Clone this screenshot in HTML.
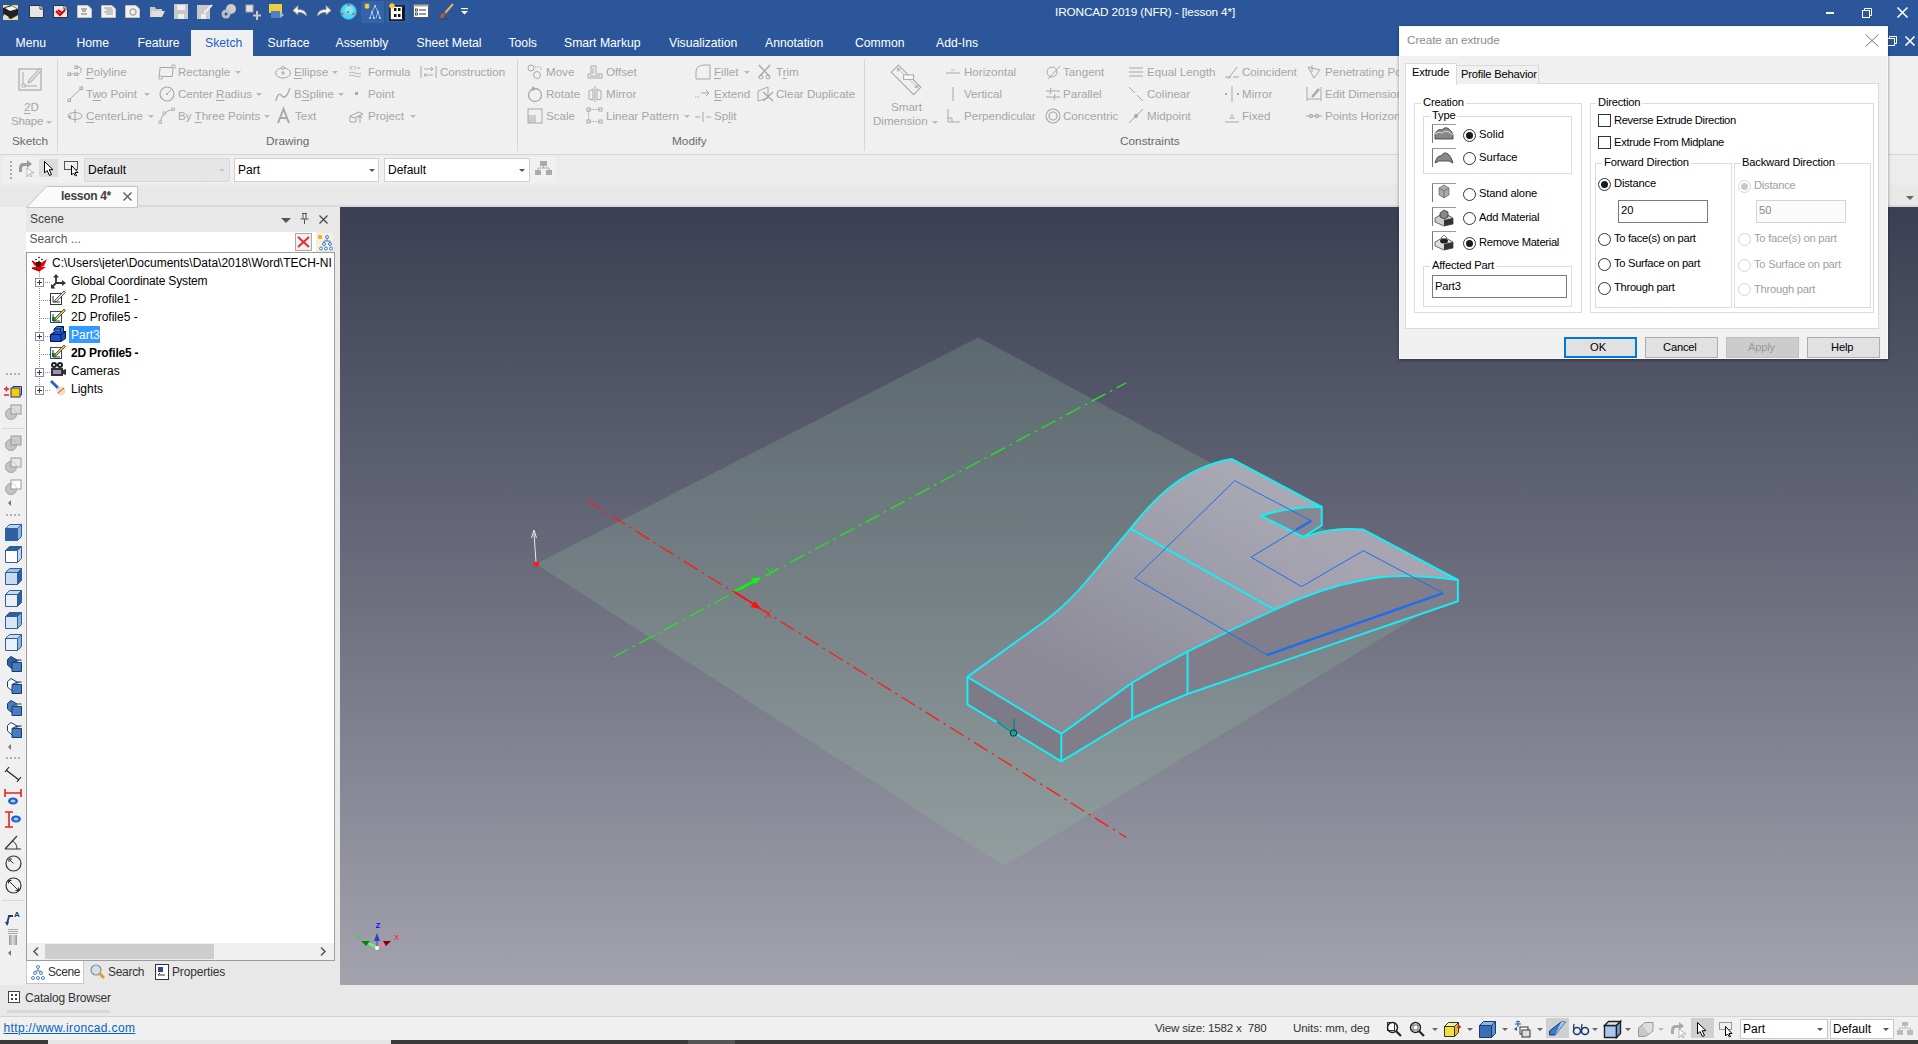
<!DOCTYPE html><html><head><meta charset="utf-8"><style>*{margin:0;padding:0;box-sizing:border-box}
html,body{width:1918px;height:1044px;overflow:hidden;background:#f0f0f0;font-family:"Liberation Sans",sans-serif;font-size:12px;color:#000}
.a{position:absolute}
.t{position:absolute;white-space:nowrap;line-height:1}
svg{position:absolute;overflow:visible}
.tab{position:absolute;top:37px;color:#fff;font-size:12.2px;white-space:nowrap;line-height:1}
.rb{position:absolute;color:#a6a6a6;font-size:11.6px;white-space:nowrap;line-height:1}
.gl{position:absolute;color:#6a6a6a;font-size:11.8px;white-space:nowrap;line-height:1;top:136px}
.sep{position:absolute;width:1px;background:#d6d6d6}
.dd{position:absolute;width:0;height:0;border-left:3px solid transparent;border-right:3px solid transparent;border-top:3px solid #b8b8b8}
.tree{position:absolute;font-size:12px;white-space:nowrap;line-height:1;color:#000}
.dlg{position:absolute;font-size:11.2px;white-space:nowrap;line-height:1;color:#000}
.rad{position:absolute;width:13px;height:13px;border:1px solid #333;border-radius:50%;background:#fff}
.rad.on::after{content:"";position:absolute;left:2px;top:2px;width:7px;height:7px;border-radius:50%;background:#1a1a1a}
.rad.dis{border-color:#d4d4d4;background:#fff}
.rad.dis.on::after{background:#c8c8c8}
.chk{position:absolute;width:13px;height:13px;border:1px solid #333;background:#fff}
.grp{position:absolute;border:1px solid #dcdcdc;border-right-color:#fff;border-bottom-color:#fff;box-shadow:1px 1px 0 #dcdcdc inset}
.btn{position:absolute;border:1px solid #adadad;background:#e1e1e1;font-size:12px;text-align:center;color:#000}

u{text-decoration:underline;text-underline-offset:2px}
</style></head><body>
<div class="a" style="left:0;top:0;width:1918px;height:56px;background:#2b579a"></div>
<div class="a" style="left:0;top:56px;width:1918px;height:98px;background:#f0f0f0"></div>
<div class="a" style="left:0;top:154px;width:1918px;height:1px;background:#d5d5d5"></div>
<div class="a" style="left:0;top:155px;width:1918px;height:30px;background:#ececec"></div>
<div class="a" style="left:3px;top:157px;width:201px;height:26px;background:#f0f0f0"></div>
<div class="a" style="left:206px;top:157px;width:350px;height:26px;background:#f0f0f0"></div>
<div class="a" style="left:0;top:185px;width:1918px;height:22px;background:#e8e8e8"></div>
<div class="a" style="left:0;top:207px;width:26px;height:753px;background:#f0f0f0"></div>
<div class="a" style="left:26px;top:207px;width:314px;height:778px;background:#e8e8e8"></div>
<div class="a" style="left:340px;top:207px;width:1578px;height:778px;background:linear-gradient(#3b3f53 0%,#5a5d6e 30%,#7c7d8a 60%,#a0a1aa 100%)"></div>
<div class="a" style="left:0;top:985px;width:1918px;height:31px;background:#e8e8e8"></div>
<div class="a" style="left:0;top:1016px;width:1918px;height:1px;background:#d4d4d4"></div>
<div class="a" style="left:0;top:1017px;width:1918px;height:23px;background:#f0f0f0"></div>
<div class="a" style="left:0;top:1040px;width:1918px;height:4px;background:#3a3a3a"></div>
<div class="a" style="left:48px;top:1040px;width:343px;height:4px;background:#e6e6e6"></div>
<div class="a" style="left:688px;top:1040px;width:47px;height:4px;background:#555"></div>
<svg style="left:3px;top:5px" width="15" height="15" viewBox="0 0 15 15"><rect x="0" y="0" width="15" height="15" fill="#e8e0a0"/><path d="M0 3 L8 0 L15 4 L15 10 L8 14 L0 11Z" fill="#222"/><path d="M2 3 L9 1 L14 4 L7 6Z" fill="#f5f5f5"/><path d="M1 9 L6 12 L4 14 L0 12Z" fill="#ddd"/></svg>
<svg style="left:29px;top:5px" width="15" height="13" viewBox="0 0 15 13"><path d="M0.5 0.5 H11 L14.5 4 V12.5 H0.5Z" fill="#e6e6ea" stroke="#333" stroke-width="1"/><path d="M11 0.5 V4 H14.5" fill="#fff" stroke="#333"/></svg>
<svg style="left:53px;top:5px" width="15" height="13" viewBox="0 0 15 13"><path d="M0.5 0.5 H11 L14.5 4 V12.5 H0.5Z" fill="#e6e6ea" stroke="#333" stroke-width="1"/><path d="M11 0.5 V4 H14.5" fill="#fff" stroke="#333"/><path d="M3 6 L7 10 L12 5 M5 5 L9 8" stroke="#d00" stroke-width="2" fill="none"/></svg>
<svg style="left:77px;top:5px" width="15" height="13" viewBox="0 0 15 13"><path d="M0.5 0.5 H11 L14.5 4 V12.5 H0.5Z" fill="#f2f2f2" stroke="#c8c0b0" stroke-width="1"/><path d="M4 4 H10 M5 6 H9 M4 9 H10" stroke="#999" stroke-width="1.5"/></svg>
<svg style="left:101px;top:5px" width="15" height="13" viewBox="0 0 15 13"><path d="M0.5 0.5 H11 L14.5 4 V12.5 H0.5Z" fill="#f2f2f2" stroke="#c8c0b0" stroke-width="1"/><path d="M3 3 H11 M5 5 H12 M3 7 H12 M5 9 H12" stroke="#999" stroke-width="1.2"/></svg>
<svg style="left:125px;top:5px" width="15" height="13" viewBox="0 0 15 13"><path d="M0.5 0.5 H11 L14.5 4 V12.5 H0.5Z" fill="#f2f2f2" stroke="#c8c0b0" stroke-width="1"/><circle cx="8" cy="7" r="3" stroke="#aaa" fill="none" stroke-width="1.4"/></svg>
<svg style="left:149px;top:5px" width="16" height="13" viewBox="0 0 16 13"><path d="M1 2 H6 L7 4 H13 V12 H1Z" fill="#c8c8c8"/><path d="M3 6 H16 L13 12 H1Z" fill="#dedede"/></svg>
<svg style="left:174px;top:4px" width="14" height="15" viewBox="0 0 14 15"><rect x="0" y="0" width="14" height="15" fill="#c9c9c9"/><rect x="3" y="1" width="8" height="5" fill="#eee"/><rect x="4" y="10" width="6" height="5" fill="#eee"/></svg>
<svg style="left:197px;top:4px" width="16" height="15" viewBox="0 0 16 15"><rect x="0" y="1" width="13" height="14" fill="#c9c9c9"/><rect x="4" y="10" width="5" height="5" fill="#eee"/><path d="M7 9 L15 1" stroke="#eee" stroke-width="2"/></svg>
<svg style="left:221px;top:3px" width="16" height="16" viewBox="0 0 16 16"><circle cx="10" cy="6" r="5" fill="#ccc"/><circle cx="5" cy="11" r="4.5" fill="#bbb"/><circle cx="5" cy="11" r="1.5" fill="#2b579a"/></svg>
<svg style="left:245px;top:3px" width="17" height="17" viewBox="0 0 17 17"><rect x="1" y="2" width="7" height="7" fill="#e0e0e0" stroke="#aaa"/><path d="M12 8 V17 M8 12.5 H16" stroke="#c8c8c8" stroke-width="2"/></svg>
<svg style="left:268px;top:3px" width="17" height="17" viewBox="0 0 17 17"><rect x="1" y="1" width="13" height="9" fill="#f0d040"/><rect x="3" y="8" width="9" height="7" fill="#5080c0"/><path d="M12 9 L16 12 L12 15" fill="#a0c0e0"/></svg>
<svg style="left:292px;top:4px" width="16" height="13" viewBox="0 0 16 13"><path d="M14.5 12 C14.5 7 11 5.5 6 5.5 L6 1.5 L0.8 6.5 L6 11 L6 8.5 C10 8.5 11 9 14.5 12Z" fill="#f4f4f4" stroke="#888" stroke-width="0.9"/></svg>
<svg style="left:316px;top:4px" width="16" height="13" viewBox="0 0 16 13"><path d="M1.5 12 C1.5 7 5 5.5 10 5.5 L10 1.5 L15.2 6.5 L10 11 L10 8.5 C6 8.5 5 9 1.5 12Z" fill="#f4f4f4" stroke="#888" stroke-width="0.9"/></svg>
<svg style="left:340px;top:3px" width="17" height="17" viewBox="0 0 17 17"><circle cx="8.5" cy="8.5" r="8" fill="#50d8f0"/><circle cx="8.5" cy="8.5" r="8" fill="none" stroke="#3090c0"/><circle cx="9" cy="7" r="4" fill="#a8f0ff" opacity="0.6"/><circle cx="8.5" cy="2" r="1" fill="#e33"/><circle cx="8" cy="9" r="1" fill="#e33"/><circle cx="2.5" cy="11" r="1" fill="#e33"/><circle cx="13.5" cy="11" r="1" fill="#e33"/></svg>
<div class="a" style="left:361px;top:1px;width:23px;height:22px;background:#3563a8"></div>
<svg style="left:364px;top:3px" width="17" height="17" viewBox="0 0 17 17"><path d="M3 0.5 V6 M0.5 3 H5.5 M1 1 L5 5 M5 1 L1 5" stroke="#f8d030" stroke-width="1.2"/><g fill="none" stroke="#a8c8ec" stroke-width="0.9"><path d="M11 3 L8 9 M11 3 L14 9 M8 9 L6 15 M8 9 L10 15 M14 9 L12 15 M14 9 L16 15"/></g><g fill="#c0d8f0"><circle cx="11" cy="3" r="1"/><circle cx="8" cy="9" r="1"/><circle cx="14" cy="9" r="1"/><circle cx="6" cy="15" r="1"/><circle cx="10" cy="15" r="1"/><circle cx="16" cy="15" r="1"/></g></svg>
<div class="a" style="left:386px;top:1px;width:23px;height:22px;background:#2f5ea2"></div>
<svg style="left:388px;top:3px" width="18" height="17" viewBox="0 0 18 17"><rect x="2" y="3" width="14" height="14" fill="#fff" stroke="#111" stroke-width="1.5"/><rect x="6" y="5" width="2.5" height="3" fill="#111"/><rect x="10" y="5" width="2.5" height="3" fill="#111"/><rect x="6" y="11" width="2.5" height="3" fill="#111"/><rect x="10" y="11" width="2.5" height="3" fill="#111"/><path d="M15 4 V16" stroke="#111" stroke-width="2"/><path d="M4 0 V6 M1 3 H7 M2 1 L6 5 M6 1 L2 5" stroke="#f8d030" stroke-width="1.3"/></svg>
<svg style="left:413px;top:4px" width="16" height="14" viewBox="0 0 16 14"><rect x="0.5" y="0.5" width="15" height="13" fill="#fff" stroke="#555"/><rect x="0.5" y="0.5" width="15" height="2" fill="#aaa"/><rect x="2.5" y="5" width="2" height="2" fill="none" stroke="#333" stroke-width="0.8"/><rect x="2.5" y="9" width="2" height="2" fill="none" stroke="#333" stroke-width="0.8"/><path d="M6 6 H13 M6 10 H13" stroke="#333" stroke-width="1"/></svg>
<svg style="left:439px;top:3px" width="15" height="17" viewBox="0 0 15 17"><path d="M14 1 L6 10" stroke="#c89040" stroke-width="2.5"/><path d="M14 1 L7 9" stroke="#f0d8a0" stroke-width="1"/><path d="M2 11 L6 10 L5 14 Q3 16 1 16Z" fill="#d05020"/><path d="M0 16 H10" stroke="#20407a" stroke-width="1"/></svg>
<svg style="left:461px;top:8px" width="7" height="7" viewBox="0 0 7 7"><rect x="0" y="0" width="7" height="1.2" fill="#fff"/><path d="M0 3 H7 L3.5 6.5Z" fill="#fff"/></svg>
<div class="t" style="left:1055px;top:7px;color:#fff;font-size:11.8px;letter-spacing:-0.15px">IRONCAD 2019 (NFR) - [lesson 4*]</div>
<div class="a" style="left:1826px;top:12px;width:8px;height:2px;background:#fff"></div>
<svg style="left:1862px;top:8px" width="10" height="10" viewBox="0 0 10 10"><rect x="0.5" y="2.5" width="7" height="7" fill="none" stroke="#fff"/><path d="M2.5 2.5 V0.5 H9.5 V7.5 H7.5" fill="none" stroke="#fff"/></svg>
<svg style="left:1897px;top:7px" width="11" height="11" viewBox="0 0 11 11"><path d="M0.5 0.5 L10.5 10.5 M10.5 0.5 L0.5 10.5" stroke="#fff" stroke-width="1.6"/></svg>
<div class="tab" style="left:15.5px">Menu</div>
<div class="tab" style="left:76.5px">Home</div>
<div class="tab" style="left:137.5px">Feature</div>
<div class="tab" style="left:267.5px">Surface</div>
<div class="tab" style="left:335.5px">Assembly</div>
<div class="tab" style="left:416.5px">Sheet Metal</div>
<div class="tab" style="left:508.5px">Tools</div>
<div class="tab" style="left:564px">Smart Markup</div>
<div class="tab" style="left:669px">Visualization</div>
<div class="tab" style="left:765px">Annotation</div>
<div class="tab" style="left:855px">Common</div>
<div class="tab" style="left:936px">Add-Ins</div>
<div class="a" style="left:191px;top:30px;width:62px;height:26px;background:#f0f0f0"></div>
<div class="tab" style="left:205px;color:#1c5fc9">Sketch</div>
<svg style="left:1887px;top:36px" width="10" height="10" viewBox="0 0 10 10"><rect x="0.5" y="2.5" width="7" height="7" fill="none" stroke="#fff"/><path d="M2.5 2.5 V0.5 H9.5 V7.5 H7.5" fill="none" stroke="#fff"/></svg>
<svg style="left:1905px;top:36px" width="10" height="10" viewBox="0 0 10 10"><path d="M0.5 0.5 L9.5 9.5 M9.5 0.5 L0.5 9.5" stroke="#fff" stroke-width="1.6"/></svg>
<svg style="left:18px;top:65px" width="25" height="26" viewBox="0 0 25 26"><rect x="1" y="4" width="22" height="21" fill="none" stroke="#a8a8a8" stroke-width="1.2"/><path d="M5 7 V21 H19" fill="none" stroke="#a8a8a8"/><rect x="4" y="19" width="3" height="3" fill="#f0f0f0" stroke="#a8a8a8" stroke-width="0.8"/><path d="M11 15 L22 3 L24 5 L13 17 L10 18Z" fill="#ddd" stroke="#a8a8a8"/></svg>
<div class="rb" style="left:24px;top:101px"><u>2</u>D</div>
<div class="rb" style="left:11px;top:115px;letter-spacing:-0.3px">Shape</div>
<div class="dd" style="left:46px;top:121px"></div>
<div class="gl" style="left:12px">Sketch</div>
<div class="sep" style="left:57px;top:59px;height:92px"></div>
<svg style="left:67px;top:64px" width="16" height="16" viewBox="0 0 16 16"><rect x="1" y="9" width="2.5" height="2.5" fill="none" stroke="#a8a8a8"/><rect x="8" y="9" width="2.5" height="2.5" fill="none" stroke="#a8a8a8"/><rect x="8" y="2" width="2.5" height="2.5" fill="none" stroke="#a8a8a8"/><path d="M3.5 10 H8 M10.5 10.5 Q15 9 14 5 Q13 2 10.5 3" fill="none" stroke="#a8a8a8"/></svg>
<div class="rb" style="left:86px;top:66px"><u>P</u>olyline</div>
<svg style="left:67px;top:86px" width="16" height="16" viewBox="0 0 16 16"><rect x="1" y="13" width="2.5" height="2.5" fill="none" stroke="#a8a8a8"/><rect x="13" y="1" width="2.5" height="2.5" fill="none" stroke="#a8a8a8"/><path d="M3 13 L13.5 3" stroke="#a8a8a8"/></svg>
<div class="rb" style="left:86px;top:88px">T<u>w</u>o Point</div>
<div class="dd" style="left:144px;top:93px"></div>
<svg style="left:67px;top:108px" width="16" height="16" viewBox="0 0 16 16"><ellipse cx="8" cy="8" rx="7" ry="3.5" fill="none" stroke="#a8a8a8"/><path d="M8 1 V15" stroke="#a8a8a8"/><path d="M1 9 L4 7 L4 11Z" fill="#a8a8a8"/></svg>
<div class="rb" style="left:86px;top:110px"><u>C</u>enterLine</div>
<div class="dd" style="left:148px;top:115px"></div>
<svg style="left:159px;top:64px" width="16" height="16" viewBox="0 0 16 16"><rect x="1.5" y="3.5" width="13" height="9" fill="none" stroke="#a8a8a8" transform="skewX(-6)"/><rect x="13" y="1" width="3" height="3" fill="#f0f0f0" stroke="#a8a8a8" stroke-width="0.8"/><rect x="0" y="12" width="3" height="3" fill="#f0f0f0" stroke="#a8a8a8" stroke-width="0.8"/></svg>
<div class="rb" style="left:178px;top:66px">Rectangle</div>
<div class="dd" style="left:235px;top:71px"></div>
<svg style="left:159px;top:86px" width="16" height="16" viewBox="0 0 16 16"><circle cx="8" cy="8" r="7" fill="none" stroke="#a8a8a8" stroke-width="1.2"/><path d="M8 8 L12 4" stroke="#a8a8a8"/><circle cx="8" cy="8" r="1" fill="#a8a8a8"/></svg>
<div class="rb" style="left:178px;top:88px">Center <u>R</u>adius</div>
<div class="dd" style="left:256px;top:93px"></div>
<svg style="left:159px;top:108px" width="16" height="16" viewBox="0 0 16 16"><path d="M1 15 Q3 3 15 1" fill="none" stroke="#a8a8a8"/><rect x="0" y="13" width="2.5" height="2.5" fill="#f0f0f0" stroke="#a8a8a8" stroke-width="0.8"/><rect x="4" y="4" width="2.5" height="2.5" fill="#f0f0f0" stroke="#a8a8a8" stroke-width="0.8"/><rect x="13" y="0" width="2.5" height="2.5" fill="#f0f0f0" stroke="#a8a8a8" stroke-width="0.8"/></svg>
<div class="rb" style="left:178px;top:110px">By <u>T</u>hree Points</div>
<div class="dd" style="left:264px;top:115px"></div>
<svg style="left:275px;top:64px" width="16" height="16" viewBox="0 0 16 16"><ellipse cx="8" cy="9" rx="7.5" ry="5" fill="none" stroke="#a8a8a8"/><circle cx="8" cy="4" r="1.5" fill="#f0f0f0" stroke="#a8a8a8"/><path d="M8 7 V11 M6 9 H10" stroke="#a8a8a8"/></svg>
<div class="rb" style="left:294px;top:66px"><u>E</u>llipse</div>
<div class="dd" style="left:332px;top:71px"></div>
<svg style="left:275px;top:86px" width="16" height="16" viewBox="0 0 16 16"><path d="M1 15 Q3 5 7 10 Q11 14 15 2" fill="none" stroke="#a8a8a8" stroke-width="1.3"/></svg>
<div class="rb" style="left:294px;top:88px">B<u>S</u>pline</div>
<div class="dd" style="left:338px;top:93px"></div>
<svg style="left:277px;top:108px" width="16" height="16" viewBox="0 0 16 16"><path d="M1 15 L6.5 1 L12 15 M3 10 H10" fill="none" stroke="#a8a8a8" stroke-width="2"/></svg>
<div class="rb" style="left:295px;top:110px">Text</div>
<svg style="left:349px;top:64px" width="16" height="16" viewBox="0 0 16 16"><text x="0" y="6" font-size="6" fill="#a8a8a8" font-family="Liberation Sans">XY=</text><path d="M0 9 Q3 7 6 9 T12 9 M0 12 Q3 10 6 12 T12 12" fill="none" stroke="#a8a8a8" stroke-width="0.8"/></svg>
<div class="rb" style="left:368px;top:66px">Formula</div>
<svg style="left:349px;top:86px" width="16" height="16" viewBox="0 0 16 16"><rect x="6" y="6" width="3" height="3" fill="#a8a8a8"/></svg>
<div class="rb" style="left:368px;top:88px">Point</div>
<svg style="left:349px;top:108px" width="16" height="16" viewBox="0 0 16 16"><path d="M1 8 L10 4 L14 6 L5 10Z M1 8 V14 H7 V10" fill="none" stroke="#a8a8a8"/><path d="M11 15 V8 M9 10 L11 7 L13 10" stroke="#a8a8a8" fill="none"/></svg>
<div class="rb" style="left:368px;top:110px">Project</div>
<div class="dd" style="left:410px;top:115px"></div>
<svg style="left:421px;top:64px" width="16" height="16" viewBox="0 0 16 16"><path d="M0 2 V14 M15 2 V14 M3 5 H12 M10 3 L12 5 L10 7 M12 11 H3 M5 9 L3 11 L5 13" fill="none" stroke="#a8a8a8"/></svg>
<div class="rb" style="left:440px;top:66px">Construction</div>
<svg style="left:527px;top:64px" width="16" height="16" viewBox="0 0 16 16"><circle cx="4" cy="4" r="3" fill="none" stroke="#a8a8a8"/><circle cx="10" cy="11" r="3.5" fill="none" stroke="#a8a8a8"/><path d="M8 3 H14 V7" fill="none" stroke="#a8a8a8" stroke-dasharray="1.5 1"/></svg>
<div class="rb" style="left:546px;top:66px">Move</div>
<svg style="left:527px;top:86px" width="16" height="16" viewBox="0 0 16 16"><circle cx="8" cy="9" r="6.5" fill="none" stroke="#a8a8a8" stroke-width="1.3"/><path d="M5 0 L9 3 L5 5Z" fill="#a8a8a8"/></svg>
<div class="rb" style="left:546px;top:88px">Rotate</div>
<svg style="left:527px;top:108px" width="16" height="16" viewBox="0 0 16 16"><rect x="1" y="1" width="14" height="14" fill="none" stroke="#a8a8a8"/><rect x="1" y="7" width="8" height="8" fill="#a8a8a8" opacity="0.5"/></svg>
<div class="rb" style="left:546px;top:110px">Scale</div>
<svg style="left:587px;top:64px" width="16" height="16" viewBox="0 0 16 16"><path d="M1 14 H15 V10 H9 V2 H4 V10 H1Z M3 12 H13 M6 10 V4" fill="none" stroke="#a8a8a8"/></svg>
<div class="rb" style="left:606px;top:66px">Offset</div>
<svg style="left:587px;top:86px" width="16" height="16" viewBox="0 0 16 16"><path d="M8 0 V16" stroke="#a8a8a8"/><path d="M6 3 L2 5 V13 L6 14Z M10 3 L14 5 V13 L10 14Z" fill="none" stroke="#a8a8a8"/></svg>
<div class="rb" style="left:606px;top:88px">Mirror</div>
<svg style="left:587px;top:108px" width="16" height="16" viewBox="0 0 16 16"><rect x="0" y="0" width="3" height="3" fill="none" stroke="#a8a8a8"/><rect x="12" y="0" width="3" height="3" fill="none" stroke="#a8a8a8"/><rect x="0" y="12" width="3" height="3" fill="none" stroke="#a8a8a8"/><rect x="12" y="12" width="3" height="3" fill="none" stroke="#a8a8a8"/><path d="M3 1.5 H12 M3 13.5 H12 M1.5 3 V12" stroke="#a8a8a8" stroke-dasharray="1.5 1"/></svg>
<div class="rb" style="left:606px;top:110px">Linear Pattern</div>
<div class="dd" style="left:684px;top:115px"></div>
<svg style="left:695px;top:64px" width="16" height="16" viewBox="0 0 16 16"><path d="M1 15 V8 Q1 1 9 1 H15 V15Z" fill="none" stroke="#a8a8a8"/></svg>
<div class="rb" style="left:714px;top:66px"><u>F</u>illet</div>
<div class="dd" style="left:744px;top:71px"></div>
<svg style="left:695px;top:86px" width="16" height="16" viewBox="0 0 16 16"><path d="M0 11 H5" stroke="#a8a8a8" stroke-dasharray="1.5 1"/><path d="M6 7 H14 M11 4 L14 7 L11 10" fill="none" stroke="#a8a8a8"/></svg>
<div class="rb" style="left:714px;top:88px"><u>E</u>xtend</div>
<svg style="left:695px;top:108px" width="16" height="16" viewBox="0 0 16 16"><path d="M0 9 H5 M11 9 H16 M8 4 V14" stroke="#a8a8a8"/></svg>
<div class="rb" style="left:714px;top:110px">Sp<u>l</u>it</div>
<svg style="left:757px;top:64px" width="16" height="16" viewBox="0 0 16 16"><path d="M2 1 L13 13 M13 1 L2 13" stroke="#a8a8a8" stroke-width="1.3"/><circle cx="4" cy="13" r="2" fill="none" stroke="#a8a8a8"/><circle cx="11" cy="13" r="2" fill="none" stroke="#a8a8a8"/></svg>
<div class="rb" style="left:776px;top:66px">T<u>r</u>im</div>
<svg style="left:757px;top:86px" width="16" height="16" viewBox="0 0 16 16"><path d="M1 5 L11 1 V12 L1 15Z" fill="none" stroke="#a8a8a8"/><path d="M6 6 L16 15 M16 6 L6 15" stroke="#a8a8a8" stroke-width="1.3"/></svg>
<div class="rb" style="left:776px;top:88px">Clear Duplicate</div>
<svg style="left:945px;top:64px" width="16" height="16" viewBox="0 0 16 16"><path d="M1 9 H15" stroke="#a8a8a8"/><path d="M6 6 H10" stroke="#a8a8a8" stroke-width="0.7"/></svg>
<div class="rb" style="left:964px;top:66px">Horizontal</div>
<svg style="left:945px;top:86px" width="16" height="16" viewBox="0 0 16 16"><path d="M8 1 V15" stroke="#a8a8a8"/></svg>
<div class="rb" style="left:964px;top:88px">Vertical</div>
<svg style="left:945px;top:108px" width="16" height="16" viewBox="0 0 16 16"><path d="M3 1 V14 H15 M3 10 H7 V14" fill="none" stroke="#a8a8a8"/></svg>
<div class="rb" style="left:964px;top:110px">Perpendicular</div>
<svg style="left:1045px;top:64px" width="16" height="16" viewBox="0 0 16 16"><circle cx="7" cy="8" r="5" fill="none" stroke="#a8a8a8"/><path d="M3 15 L15 2" stroke="#a8a8a8"/></svg>
<div class="rb" style="left:1063px;top:66px">Tangent</div>
<svg style="left:1045px;top:86px" width="16" height="16" viewBox="0 0 16 16"><path d="M1 5 H15 M1 11 H15 M6 2 L5 8 M10 8 L9 14" fill="none" stroke="#a8a8a8"/></svg>
<div class="rb" style="left:1063px;top:88px">Parallel</div>
<svg style="left:1045px;top:108px" width="16" height="16" viewBox="0 0 16 16"><circle cx="8" cy="8" r="7" fill="none" stroke="#a8a8a8" stroke-width="1.2"/><circle cx="8" cy="8" r="4" fill="none" stroke="#a8a8a8" stroke-width="1.2"/></svg>
<div class="rb" style="left:1063px;top:110px">Concentric</div>
<svg style="left:1128px;top:64px" width="16" height="16" viewBox="0 0 16 16"><path d="M1 4 H15 M1 8 H15 M1 12 H15" stroke="#a8a8a8"/></svg>
<div class="rb" style="left:1147px;top:66px">Equal Length</div>
<svg style="left:1128px;top:86px" width="16" height="16" viewBox="0 0 16 16"><path d="M1 1 L7 7 M9 9 L15 15" stroke="#a8a8a8"/></svg>
<div class="rb" style="left:1147px;top:88px">Colinear</div>
<svg style="left:1128px;top:108px" width="16" height="16" viewBox="0 0 16 16"><path d="M1 15 L15 1" stroke="#a8a8a8"/><circle cx="8" cy="8" r="2" fill="#a8a8a8"/></svg>
<div class="rb" style="left:1147px;top:110px">Midpoint</div>
<svg style="left:1224px;top:64px" width="16" height="16" viewBox="0 0 16 16"><path d="M1 13 H7 M9 13 H15 M4 15 L13 3" stroke="#a8a8a8"/></svg>
<div class="rb" style="left:1242px;top:66px">Coincident</div>
<svg style="left:1224px;top:86px" width="16" height="16" viewBox="0 0 16 16"><path d="M8 0 V16" stroke="#a8a8a8"/><rect x="1" y="7" width="2" height="2" fill="#a8a8a8"/><rect x="13" y="7" width="2" height="2" fill="#a8a8a8"/></svg>
<div class="rb" style="left:1242px;top:88px">Mirror</div>
<svg style="left:1224px;top:108px" width="16" height="16" viewBox="0 0 16 16"><path d="M1 14 H15 M5 10 H11 M8 6 V10" stroke="#a8a8a8"/></svg>
<div class="rb" style="left:1242px;top:110px">Fixed</div>
<svg style="left:1306px;top:64px" width="16" height="16" viewBox="0 0 16 16"><path d="M2 3 L14 6 L8 14Z" fill="none" stroke="#a8a8a8"/><path d="M6 1 V8" stroke="#a8a8a8"/></svg>
<div class="rb" style="left:1325px;top:66px">Penetrating Points</div>
<svg style="left:1306px;top:86px" width="16" height="16" viewBox="0 0 16 16"><path d="M1 1 V15 M15 1 V15 M1 13 H15" stroke="#a8a8a8"/><path d="M6 11 L13 3" stroke="#a8a8a8" stroke-width="2.5"/></svg>
<div class="rb" style="left:1325px;top:88px">Edit Dimension</div>
<svg style="left:1306px;top:108px" width="16" height="16" viewBox="0 0 16 16"><path d="M0 8 H16" stroke="#a8a8a8"/><circle cx="5" cy="8" r="1.8" fill="none" stroke="#a8a8a8"/><circle cx="11" cy="8" r="1.8" fill="none" stroke="#a8a8a8"/></svg>
<div class="rb" style="left:1325px;top:110px">Points Horizontal</div>
<div class="gl" style="left:266px">Drawing</div>
<div class="sep" style="left:517px;top:59px;height:92px"></div>
<div class="gl" style="left:672px">Modify</div>
<div class="sep" style="left:864px;top:59px;height:92px"></div>
<svg style="left:890px;top:64px" width="32" height="32" viewBox="0 0 32 32"><path d="M1.2 8.1 L8.4 1.2 L30.8 23.3 L23.6 30.6Z" fill="none" stroke="#a8a8a8" stroke-width="1.1"/><path d="M7 4 L28 24" stroke="#c0c0c0" stroke-width="0.9"/><path d="M6.5 3.5 L11 4.5 L7.5 8Z M28.5 24.5 L24 23.5 L27.5 20Z" fill="#b8b8b8"/><rect x="13.6" y="10.9" width="10" height="4.5" fill="#fafafa" stroke="#a8a8a8" stroke-width="1"/></svg>
<div class="rb" style="left:891px;top:101px">Smart</div>
<div class="rb" style="left:873px;top:115px">Dimension</div>
<div class="dd" style="left:932px;top:121px"></div>
<div class="gl" style="left:1120px">Constraints</div>
<div class="a" style="left:10px;top:161px;width:2px;height:2px;background:#aaa"></div>
<div class="a" style="left:10px;top:165px;width:2px;height:2px;background:#aaa"></div>
<div class="a" style="left:10px;top:169px;width:2px;height:2px;background:#aaa"></div>
<div class="a" style="left:10px;top:173px;width:2px;height:2px;background:#aaa"></div>
<div class="a" style="left:10px;top:177px;width:2px;height:2px;background:#aaa"></div>
<svg style="left:18px;top:160px" width="18" height="17" viewBox="0 0 18 17"><path d="M1 8 Q1 3 6 3 H9 V0 L14 4 L9 8 V6 H6 Q4 6 4 9 V12 H1Z" fill="#9a9a9a"/><path d="M9 8 L9 17 L11 14 L13 17 L14 16 L12 13 L16 13Z" fill="#fff" stroke="#aaa" stroke-width="0.8"/></svg>
<div class="a" style="left:39px;top:159px;width:19px;height:18px;background:#dcdcdc"></div>
<svg style="left:44px;top:161px" width="11" height="15" viewBox="0 0 11 15"><path d="M0.5 0.5 V12 L3 9.5 L5.5 14.5 L7.5 13.5 L5.2 8.7 L9 8.7Z" fill="#fff" stroke="#000" stroke-width="1"/></svg>
<svg style="left:64px;top:161px" width="15" height="15" viewBox="0 0 15 15"><rect x="0.5" y="0.5" width="13" height="8" fill="none" stroke="#555"/><path d="M7.5 4.5 V14 L9.5 12 L11.5 15 L12.5 14.5 L11 11.5 L14 11.5Z" fill="#fff" stroke="#000" stroke-width="1"/></svg>
<div class="a" style="left:84px;top:158px;width:146px;height:24px;background:#e6e6e6;border:1px solid #d8d8d8"></div>
<div class="t" style="left:88px;top:164px;font-size:12px;color:#000">Default</div>
<div class="dd" style="left:219px;top:169px;border-top-color:#c8c8c8"></div>
<div class="a" style="left:234px;top:158px;width:145px;height:24px;background:#fff;border:1px solid #d0d0d0"></div>
<div class="t" style="left:238px;top:164px;font-size:12px;color:#000">Part</div>
<div class="dd" style="left:369px;top:169px;border-top-color:#555"></div>
<div class="a" style="left:384px;top:158px;width:146px;height:24px;background:#fff;border:1px solid #d0d0d0"></div>
<div class="t" style="left:388px;top:164px;font-size:12px;color:#000">Default</div>
<div class="dd" style="left:519px;top:169px;border-top-color:#555"></div>
<svg style="left:535px;top:161px" width="17" height="14" viewBox="0 0 17 14"><rect x="5" y="0" width="7" height="5" fill="#aaa"/><path d="M8.5 5 V7 M3 7 H14 M3 7 V9 M14 7 V9" stroke="#aaa"/><rect x="0" y="9" width="6" height="5" fill="#aaa"/><rect x="11" y="9" width="6" height="5" fill="#aaa"/></svg>
<div class="a" style="left:137px;top:205px;width:1781px;height:2px;background:#dadada"></div>
<svg style="left:26px;top:186px" width="112" height="22" viewBox="0 0 112 22"><path d="M0.5 21.5 L20.5 0.5 H111.5 V21.5Z" fill="#fbfbfb" stroke="#c4c4c4"/></svg>
<div class="t" style="left:61px;top:190px;font-size:12px;font-weight:bold;color:#404040;letter-spacing:-0.3px">lesson 4*</div>
<svg style="left:123px;top:192px" width="9" height="9" viewBox="0 0 9 9"><path d="M0.5 0.5 L8.5 8.5 M8.5 0.5 L0.5 8.5" stroke="#555" stroke-width="1.2"/></svg>
<div class="dd" style="left:1906px;top:196px;border-left-width:4px;border-right-width:4px;border-top:4px solid #666"></div>
<div class="t" style="left:30px;top:213px;font-size:12px;color:#444">Scene</div>
<div class="dd" style="left:281px;top:218px;border-left-width:5px;border-right-width:5px;border-top:5px solid #555"></div>
<svg style="left:300px;top:213px" width="9" height="11" viewBox="0 0 9 11"><path d="M2 0.5 H7 M3 0.5 V6 M6 0.5 V6 M0.5 6 H8.5 M4.5 6 V11" stroke="#555" fill="none"/></svg>
<svg style="left:319px;top:215px" width="9" height="9" viewBox="0 0 9 9"><path d="M0.5 0.5 L8.5 8.5 M8.5 0.5 L0.5 8.5" stroke="#444" stroke-width="1.2"/></svg>
<div class="a" style="left:26px;top:232px;width:290px;height:20px;background:#fff"></div>
<div class="t" style="left:29.5px;top:233px;font-size:12px;color:#555">Search ...</div>
<div class="a" style="left:295px;top:233px;width:17px;height:18px;background:#f0f0f0;border:1px solid #aaa"></div>
<svg style="left:297px;top:236px" width="13" height="12" viewBox="0 0 13 12"><path d="M1 1 L12 11 M12 1 L1 11" stroke="#e03030" stroke-width="2"/></svg>
<div class="a" style="left:316px;top:233px;width:17px;height:18px;background:#f5f0e0"></div>
<svg style="left:317px;top:234px" width="16" height="16" viewBox="0 0 16 16"><circle cx="3" cy="3" r="2.2" fill="#f0b020"/><g fill="none" stroke="#4080d0" stroke-width="1"><circle cx="10" cy="3" r="1.5"/><path d="M10 4.5 V7 M7 7 H13 M7 7 V9 M13 7 V9"/><circle cx="7" cy="10" r="1.5"/><circle cx="13" cy="10" r="1.5"/><circle cx="4" cy="14.5" r="1.5"/><circle cx="9" cy="14.5" r="1.5"/><circle cx="14" cy="14.5" r="1.5"/></g></svg>
<div class="a" style="left:26px;top:252px;width:309px;height:709px;background:#fff;border:1px solid #9c9c9c"></div>
<div class="a" style="left:39px;top:272px;width:0;height:119px;border-left:1px dotted #909090"></div>
<div class="a" style="left:39px;top:282px;width:11px;height:0;border-top:1px dotted #909090"></div>
<div class="a" style="left:39px;top:300px;width:11px;height:0;border-top:1px dotted #909090"></div>
<div class="a" style="left:39px;top:318px;width:11px;height:0;border-top:1px dotted #909090"></div>
<div class="a" style="left:39px;top:336px;width:11px;height:0;border-top:1px dotted #909090"></div>
<div class="a" style="left:39px;top:354px;width:11px;height:0;border-top:1px dotted #909090"></div>
<div class="a" style="left:39px;top:372px;width:11px;height:0;border-top:1px dotted #909090"></div>
<div class="a" style="left:39px;top:390px;width:11px;height:0;border-top:1px dotted #909090"></div>
<div class="a" style="left:35px;top:278px;width:9px;height:9px;background:#fff;border:1px solid #8c8c8c"></div>
<div class="a" style="left:37px;top:282px;width:5px;height:1px;background:#203c90"></div>
<div class="a" style="left:39px;top:280px;width:1px;height:5px;background:#203c90"></div>
<div class="a" style="left:35px;top:332px;width:9px;height:9px;background:#fff;border:1px solid #8c8c8c"></div>
<div class="a" style="left:37px;top:336px;width:5px;height:1px;background:#203c90"></div>
<div class="a" style="left:39px;top:334px;width:1px;height:5px;background:#203c90"></div>
<div class="a" style="left:35px;top:368px;width:9px;height:9px;background:#fff;border:1px solid #8c8c8c"></div>
<div class="a" style="left:37px;top:372px;width:5px;height:1px;background:#203c90"></div>
<div class="a" style="left:39px;top:370px;width:1px;height:5px;background:#203c90"></div>
<div class="a" style="left:35px;top:386px;width:9px;height:9px;background:#fff;border:1px solid #8c8c8c"></div>
<div class="a" style="left:37px;top:390px;width:5px;height:1px;background:#203c90"></div>
<div class="a" style="left:39px;top:388px;width:1px;height:5px;background:#203c90"></div>
<svg style="left:31px;top:256px" width="17" height="16" viewBox="0 0 17 16"><path d="M1 5 L7 9 L16 3 L13 10 L10 11 L15 11 L9 15 L1 11 L6 11 L3 9Z" fill="#f00000"/><path d="M1 5 L7 9 M1 12 L9 15" stroke="#a00000" stroke-width="1.5"/><rect x="5" y="6" width="5" height="5" fill="#600000"/><circle cx="8" cy="1.5" r="0.8" fill="#000"/><circle cx="5" cy="3.5" r="0.8" fill="#000"/><circle cx="11" cy="3.5" r="0.8" fill="#000"/><circle cx="8" cy="5.5" r="0.8" fill="#000"/></svg>
<div class="tree" style="left:52px;top:257px;width:281px;overflow:hidden">C:\Users\jeter\Documents\Data\2018\Word\TECH-NI</div>
<svg style="left:50px;top:273px" width="17" height="17" viewBox="0 0 17 17"><path d="M6 4 V10 H13 M6 10 L2.5 13.5" stroke="#333" stroke-width="1.8" fill="none"/><path d="M3 4.5 L6 1 L9 4.5Z M12 7 L16 10 L12 13Z M1 11 L1 15.5 L5.5 15.5Z" fill="#333"/></svg>
<div class="tree" style="left:71px;top:275px;letter-spacing:-0.15px">Global Coordinate System</div>
<svg style="left:50px;top:290px" width="16" height="15" viewBox="0 0 16 15"><rect x="0.5" y="3.5" width="11" height="11" fill="#fff" stroke="#333"/><path d="M3 6 V12 H10" stroke="#333" fill="none"/><path d="M5 10 L14 1 L15.5 2.5 L6.5 11.5 L4.5 12Z" fill="#ddd" stroke="#333" stroke-width="0.8"/></svg>
<div class="tree" style="left:71px;top:293px">2D Profile1 -</div>
<svg style="left:50px;top:308px" width="16" height="15" viewBox="0 0 16 15"><rect x="0.5" y="3.5" width="11" height="11" fill="#fff" stroke="#2a4a8a"/><path d="M5 10 L14 1 L15.5 2.5 L6.5 11.5 L4.5 12Z" fill="#f0c040" stroke="#333" stroke-width="0.8"/><rect x="2" y="9" width="4" height="4" fill="#20a040"/><path d="M3 6 V13 H10" stroke="#333" fill="none"/></svg>
<div class="tree" style="left:71px;top:311px">2D Profile5 -</div>
<svg style="left:50px;top:326px" width="16" height="16" viewBox="0 0 16 16"><path d="M0.5 8.5 L5 5.5 H15.5 V12.5 L11 15.5 H0.5Z" fill="#1a50c0" stroke="#081848"/><path d="M0.5 8.5 H11 L15.5 5.5 M11 8.5 V15.5" fill="none" stroke="#081848"/><path d="M4 5.5 V3 L7 0.5 H13.5 V5.5" fill="#3a80e8" stroke="#081848"/><path d="M4 3 H10.5 L13.5 0.5 M10.5 3 V5.5" fill="none" stroke="#081848"/></svg>
<div class="a" style="left:69px;top:326px;width:31px;height:17px;background:#3399ff"></div>
<div class="tree" style="left:71px;top:329px;color:#fff">Part3</div>
<svg style="left:50px;top:344px" width="16" height="15" viewBox="0 0 16 15"><rect x="0.5" y="3.5" width="11" height="11" fill="#fff" stroke="#2a4a8a"/><path d="M5 10 L14 1 L15.5 2.5 L6.5 11.5 L4.5 12Z" fill="#f0c040" stroke="#333" stroke-width="0.8"/><rect x="2" y="9" width="4" height="4" fill="#20a040"/><path d="M3 6 V13 H10" stroke="#333" fill="none"/></svg>
<div class="tree" style="left:71px;top:347px;font-weight:bold;letter-spacing:-0.2px">2D Profile5 -</div>
<svg style="left:50px;top:361px" width="16" height="16" viewBox="0 0 16 16"><circle cx="4" cy="4" r="3" fill="#222"/><circle cx="10" cy="4" r="3" fill="#222"/><circle cx="4" cy="4" r="1" fill="#fff"/><circle cx="10" cy="4" r="1" fill="#fff"/><rect x="1" y="7" width="12" height="8" fill="#333"/><rect x="3" y="9" width="8" height="4" fill="#a090c0"/><path d="M13 9 L16 8 V14 L13 13Z" fill="#333"/></svg>
<div class="tree" style="left:71px;top:365px">Cameras</div>
<svg style="left:50px;top:380px" width="16" height="16" viewBox="0 0 16 16"><path d="M1 1 L9 9" stroke="#3060c0" stroke-width="3"/><circle cx="11" cy="11" r="4.5" fill="#e8e0c0"/><path d="M8 13 L14 8" stroke="#e03030" stroke-width="1"/></svg>
<div class="tree" style="left:71px;top:383px">Lights</div>
<div class="a" style="left:27px;top:943px;width:307px;height:17px;background:#f0f0f0"></div>
<div class="a" style="left:45px;top:944px;width:169px;height:15px;background:#cdcdcd"></div>
<svg style="left:33px;top:947px" width="6" height="9" viewBox="0 0 6 9"><path d="M5 0.5 L1 4.5 L5 8.5" stroke="#555" stroke-width="1.5" fill="none"/></svg>
<svg style="left:320px;top:947px" width="6" height="9" viewBox="0 0 6 9"><path d="M1 0.5 L5 4.5 L1 8.5" stroke="#555" stroke-width="1.5" fill="none"/></svg>
<div class="a" style="left:26px;top:961px;width:58px;height:23px;background:#fff;border:1px solid #c8c8c8;border-top:none"></div>
<svg style="left:31px;top:965px" width="14" height="15" viewBox="0 0 14 15"><g fill="none" stroke="#4a80c8" stroke-width="1"><circle cx="7" cy="2" r="1.5"/><path d="M7 3.5 V6 M4 6 H10"/><circle cx="4" cy="8" r="1.5"/><circle cx="10" cy="8" r="1.5"/><circle cx="2" cy="13" r="1.5"/><circle cx="7" cy="13" r="1.5"/><circle cx="12" cy="13" r="1.5"/></g></svg>
<div class="t" style="left:48px;top:966px;font-size:12px;color:#333;letter-spacing:-0.4px">Scene</div>
<svg style="left:90px;top:964px" width="16" height="16" viewBox="0 0 16 16"><circle cx="6" cy="6" r="5" fill="#d0e0f0" stroke="#8090a0" stroke-width="1.2"/><path d="M9 9 L14 14" stroke="#e0a030" stroke-width="3"/></svg>
<div class="t" style="left:108px;top:966px;font-size:12px;color:#333;letter-spacing:-0.3px">Search</div>
<svg style="left:155px;top:964px" width="14" height="16" viewBox="0 0 14 16"><rect x="0.5" y="0.5" width="13" height="15" fill="#fff" stroke="#333"/><rect x="3" y="3" width="5" height="5" fill="#2a4a8a"/><path d="M3 11 H10 M3 11 L5 9" stroke="#333" fill="none"/></svg>
<div class="t" style="left:172px;top:966px;font-size:12px;color:#333;letter-spacing:-0.15px">Properties</div>
<svg style="left:8px;top:991px" width="13" height="12" viewBox="0 0 13 12"><rect x="0.5" y="0.5" width="11" height="11" fill="#fff" stroke="#444"/><rect x="3" y="3" width="2" height="2" fill="#444"/><rect x="7" y="3" width="2" height="2" fill="#444"/><rect x="3" y="7" width="2" height="2" fill="#444"/><rect x="7" y="7" width="2" height="2" fill="#444"/></svg>
<div class="t" style="left:25px;top:992px;font-size:12px;color:#333;letter-spacing:-0.2px">Catalog Browser</div>
<div class="a" style="left:7px;top:1010px;width:103px;height:3px;background:#d8d8d8"></div>
<div class="a" style="left:6px;top:373px;width:2px;height:2px;background:#b0b0b0"></div>
<div class="a" style="left:10px;top:373px;width:2px;height:2px;background:#b0b0b0"></div>
<div class="a" style="left:14px;top:373px;width:2px;height:2px;background:#b0b0b0"></div>
<div class="a" style="left:18px;top:373px;width:2px;height:2px;background:#b0b0b0"></div>
<svg style="left:4px;top:386px" width="18" height="12" viewBox="0 0 18 12"><path d="M0 3 H5 M2.5 0.5 V5.5 M0 9 H5" stroke="#e02020" stroke-width="1.5"/><rect x="7" y="2" width="9" height="9" fill="#f5d000" stroke="#20308a"/><path d="M9 2 V0.5 H17.5 V9 H16" fill="none" stroke="#20308a"/></svg>
<svg style="left:5px;top:404px" width="17" height="17" viewBox="0 0 17 17"><circle cx="6" cy="10" r="5.5" fill="#c4c4c4" stroke="#aaa"/><rect x="6" y="1" width="10" height="9" fill="#ddd" stroke="#999"/><circle cx="6" cy="10" r="5.5" fill="none" stroke="#aaa" stroke-dasharray="1 1"/></svg>
<div class="a" style="left:2px;top:428px;width:22px;height:1px;background:#d8d8d8"></div>
<svg style="left:5px;top:435px" width="17" height="17" viewBox="0 0 17 17"><circle cx="6" cy="10" r="5.5" fill="#c4c4c4" stroke="#aaa"/><rect x="6" y="1" width="10" height="9" fill="#ccc" stroke="#999"/><circle cx="6" cy="10" r="5.5" fill="none" stroke="#aaa" stroke-dasharray="1 1"/></svg>
<svg style="left:5px;top:457px" width="17" height="17" viewBox="0 0 17 17"><circle cx="6" cy="10" r="5.5" fill="#c4c4c4" stroke="#aaa"/><rect x="6" y="1" width="10" height="9" fill="#e8e8e8" stroke="#999"/><circle cx="6" cy="10" r="5.5" fill="none" stroke="#aaa" stroke-dasharray="1 1"/></svg>
<svg style="left:5px;top:479px" width="17" height="17" viewBox="0 0 17 17"><circle cx="6" cy="10" r="5.5" fill="#c4c4c4" stroke="#aaa"/><rect x="6" y="1" width="10" height="9" fill="#fff" stroke="#999"/><circle cx="6" cy="10" r="5.5" fill="none" stroke="#aaa" stroke-dasharray="1 1"/></svg>
<div class="a" style="left:8px;top:500px;width:0;height:0;border-top:3px solid transparent;border-bottom:3px solid transparent;border-right:3px solid #777"></div>
<div class="a" style="left:6px;top:514px;width:2px;height:2px;background:#b0b0b0"></div>
<div class="a" style="left:10px;top:514px;width:2px;height:2px;background:#b0b0b0"></div>
<div class="a" style="left:14px;top:514px;width:2px;height:2px;background:#b0b0b0"></div>
<div class="a" style="left:18px;top:514px;width:2px;height:2px;background:#b0b0b0"></div>
<svg style="left:5px;top:524px" width="17" height="17" viewBox="0 0 17 17"><path d="M0.5 4.5 H12.5 V16.5 H0.5Z" fill="#2e5fa0" stroke="#2e5fa0"/><path d="M0.5 4.5 L4.5 0.5 H16.5 L12.5 4.5Z" fill="#c0d4ec" stroke="#2e5fa0"/><path d="M12.5 4.5 L16.5 0.5 V12.5 L12.5 16.5Z" fill="#8cb0dc" stroke="#2e5fa0"/></svg>
<svg style="left:5px;top:546px" width="17" height="17" viewBox="0 0 17 17"><path d="M0.5 4.5 H12.5 V16.5 H0.5Z" fill="#fff" stroke="#2e5fa0"/><path d="M0.5 4.5 L4.5 0.5 H16.5 L12.5 4.5Z" fill="#2e5fa0" stroke="#2e5fa0"/><path d="M12.5 4.5 L16.5 0.5 V12.5 L12.5 16.5Z" fill="#c0d4ec" stroke="#2e5fa0"/></svg>
<svg style="left:5px;top:568px" width="17" height="17" viewBox="0 0 17 17"><path d="M0.5 4.5 H12.5 V16.5 H0.5Z" fill="#c8daf0" stroke="#2e5fa0"/><path d="M0.5 4.5 L4.5 0.5 H16.5 L12.5 4.5Z" fill="#9cbce4" stroke="#2e5fa0"/><path d="M12.5 4.5 L16.5 0.5 V12.5 L12.5 16.5Z" fill="#2e5fa0" stroke="#2e5fa0"/></svg>
<svg style="left:5px;top:590px" width="17" height="17" viewBox="0 0 17 17"><path d="M0.5 4.5 H12.5 V16.5 H0.5Z" fill="#e8f0fa" stroke="#2e5fa0"/><path d="M0.5 4.5 L4.5 0.5 H16.5 L12.5 4.5Z" fill="#c8daf0" stroke="#2e5fa0"/><path d="M12.5 4.5 L16.5 0.5 V12.5 L12.5 16.5Z" fill="#2e5fa0" stroke="#2e5fa0"/></svg>
<svg style="left:5px;top:612px" width="17" height="17" viewBox="0 0 17 17"><path d="M0.5 4.5 H12.5 V16.5 H0.5Z" fill="#d8e6f6" stroke="#2e5fa0"/><path d="M0.5 4.5 L4.5 0.5 H16.5 L12.5 4.5Z" fill="#2e5fa0" stroke="#2e5fa0"/><path d="M12.5 4.5 L16.5 0.5 V12.5 L12.5 16.5Z" fill="#8cb0dc" stroke="#2e5fa0"/></svg>
<svg style="left:5px;top:634px" width="17" height="17" viewBox="0 0 17 17"><path d="M0.5 4.5 H12.5 V16.5 H0.5Z" fill="#e8f0fa" stroke="#2e5fa0"/><path d="M0.5 4.5 L4.5 0.5 H16.5 L12.5 4.5Z" fill="#c8daf0" stroke="#2e5fa0"/><path d="M12.5 4.5 L16.5 0.5 V12.5 L12.5 16.5Z" fill="#8cb0dc" stroke="#2e5fa0"/></svg>
<svg style="left:7px;top:656px" width="15" height="16" viewBox="0 0 15 16"><path d="M0.5 3.5 L4 0.5 L10 4 V15 L4 12 L0.5 9Z" fill="#2e5fa0" stroke="#1a3a70"/><path d="M5 6.5 H14.5 V15.5 H5Z" fill="#4a7cc0" stroke="#1a3a70"/><path d="M5 6.5 L10 4 H14.5" fill="#4a7cc0" stroke="#1a3a70"/></svg>
<svg style="left:7px;top:678px" width="15" height="16" viewBox="0 0 15 16"><path d="M0.5 3.5 L4 0.5 L10 4 V15 L4 12 L0.5 9Z" fill="#fff" stroke="#1a3a70"/><path d="M5 6.5 H14.5 V15.5 H5Z" fill="#4a7cc0" stroke="#1a3a70"/><path d="M5 6.5 L10 4 H14.5" fill="#4a7cc0" stroke="#1a3a70"/></svg>
<svg style="left:7px;top:700px" width="15" height="16" viewBox="0 0 15 16"><path d="M0.5 3.5 L4 0.5 L10 4 V15 L4 12 L0.5 9Z" fill="#4a7cc0" stroke="#1a3a70"/><path d="M5 6.5 H14.5 V15.5 H5Z" fill="#4a7cc0" stroke="#1a3a70"/><path d="M5 6.5 L10 4 H14.5" fill="#fff" stroke="#1a3a70"/></svg>
<svg style="left:7px;top:722px" width="15" height="16" viewBox="0 0 15 16"><path d="M0.5 3.5 L4 0.5 L10 4 V15 L4 12 L0.5 9Z" fill="#fff" stroke="#1a3a70"/><path d="M5 6.5 H14.5 V15.5 H5Z" fill="#4a7cc0" stroke="#1a3a70"/><path d="M5 6.5 L10 4 H14.5" fill="#2e5fa0" stroke="#1a3a70"/></svg>
<div class="a" style="left:8px;top:744px;width:0;height:0;border-top:3px solid transparent;border-bottom:3px solid transparent;border-right:3px solid #777"></div>
<div class="a" style="left:6px;top:757px;width:2px;height:2px;background:#b0b0b0"></div>
<div class="a" style="left:10px;top:757px;width:2px;height:2px;background:#b0b0b0"></div>
<div class="a" style="left:14px;top:757px;width:2px;height:2px;background:#b0b0b0"></div>
<div class="a" style="left:18px;top:757px;width:2px;height:2px;background:#b0b0b0"></div>
<svg style="left:5px;top:766px" width="17" height="17" viewBox="0 0 17 17"><path d="M1 4 L14 14 M0 6 L4 1 M12 16 L16 11" stroke="#222" stroke-width="1.2"/></svg>
<svg style="left:4px;top:789px" width="18" height="17" viewBox="0 0 18 17"><path d="M1 0 V8 M17 0 V8 M1 4 H17" stroke="#e82020" stroke-width="1.6"/><ellipse cx="9" cy="12" rx="5" ry="3.5" fill="#2060c0"/><ellipse cx="9" cy="12" rx="2.5" ry="1.5" fill="#a0d0ff"/></svg>
<svg style="left:4px;top:811px" width="18" height="17" viewBox="0 0 18 17"><path d="M1 1 H9 M1 16 H9 M5 1 V16" stroke="#e82020" stroke-width="1.6"/><ellipse cx="12" cy="8" rx="5" ry="3.5" fill="#2060c0"/><ellipse cx="12" cy="8" rx="2.5" ry="1.5" fill="#a0d0ff"/></svg>
<svg style="left:4px;top:833px" width="18" height="17" viewBox="0 0 18 17"><path d="M1 16 H17 M1 16 L13 3" stroke="#333" stroke-width="1.2" fill="none"/><path d="M8 8 Q13 10 13 16" stroke="#333" fill="none"/></svg>
<svg style="left:5px;top:855px" width="17" height="17" viewBox="0 0 17 17"><circle cx="8.5" cy="8.5" r="7.5" fill="none" stroke="#333" stroke-width="1.2"/><path d="M8.5 8.5 L4 4 M4 4 L4 7 M4 4 L7 4" stroke="#333" fill="none"/></svg>
<svg style="left:5px;top:877px" width="17" height="17" viewBox="0 0 17 17"><circle cx="8.5" cy="8.5" r="7.5" fill="none" stroke="#333" stroke-width="1.2"/><path d="M3.5 3.5 L13.5 13.5 M3.5 3.5 V6.5 M3.5 3.5 H6.5 M13.5 13.5 V10.5 M13.5 13.5 H10.5" stroke="#333" fill="none"/></svg>
<div class="a" style="left:2px;top:900px;width:22px;height:1px;background:#d8d8d8"></div>
<svg style="left:5px;top:910px" width="17" height="17" viewBox="0 0 17 17"><path d="M2 14 L4 6 H8" stroke="#1a3a70" stroke-width="1.8" fill="none"/><path d="M0 12 L2 16 L4 12Z" fill="#1a3a70"/><text x="9" y="7" font-size="8" font-weight="bold" fill="#1a3a70" font-family="Liberation Sans">A</text></svg>
<svg style="left:8px;top:929px" width="10" height="16" viewBox="0 0 10 16"><defs><linearGradient id="lg1" x1="0" x2="1"><stop offset="0" stop-color="#999"/><stop offset="0.5" stop-color="#ddd"/><stop offset="1" stop-color="#999"/></linearGradient></defs><path d="M0 0.5 H10 M0 2.5 H10 M0 4.5 H10" stroke="#aaa"/><rect x="1" y="6" width="8" height="10" fill="url(#lg1)"/></svg>
<div class="a" style="left:8px;top:950px;width:0;height:0;border-top:3px solid transparent;border-bottom:3px solid transparent;border-right:3px solid #777"></div>
<svg style="left:340px;top:207px" width="1578" height="778" viewBox="340 207 1578 778"><defs><linearGradient id="bg" x1="0" y1="207" x2="0" y2="985" gradientUnits="userSpaceOnUse"><stop offset="0" stop-color="#3b3f53"/><stop offset="0.5" stop-color="#6d6f7f"/><stop offset="1" stop-color="#a2a3ad"/></linearGradient><linearGradient id="top" x1="1230" y1="470" x2="1100" y2="700" gradientUnits="userSpaceOnUse"><stop offset="0" stop-color="#a9a9b4"/><stop offset="0.45" stop-color="#9c9ba8"/><stop offset="1" stop-color="#8b8a96"/></linearGradient><linearGradient id="fin" x1="1400" y1="560" x2="1200" y2="700" gradientUnits="userSpaceOnUse"><stop offset="0" stop-color="#a2a1ad"/><stop offset="1" stop-color="#8a8995"/></linearGradient></defs><rect x="340" y="207" width="1578" height="778" fill="url(#bg)"/><path d="M536 564 L978.4 337.2 L1210 462.6 L1445 600 L1004 866Z" fill="rgba(150,195,160,0.22)"/><path d="M587.4 500.7 L1126.4 837.5" stroke="#ff1a1a" stroke-width="1.3" stroke-dasharray="16 5 2.5 5"/><path d="M614 656.8 L1126.4 382.7" stroke="#22e622" stroke-width="1.3" stroke-dasharray="16 5 2.5 5"/><path d="M734 591.5 L756 580" stroke="#00ff00" stroke-width="2"/><path d="M761.5 577.5 L751 578.5 L755 584Z" fill="#00ff00"/><path d="M734 591.5 L756 605.5" stroke="#ff1010" stroke-width="2"/><path d="M761 609 L750.5 607 L755 601Z" fill="#ff1010"/><path d="M765 610 L771 618 M771 610 L765 618" stroke="#ff2020" stroke-width="1"/><path d="M767 568 L770 572 L773 568 M770 572 V577" stroke="#20e020" stroke-width="1" fill="none"/><path d="M536 562 L534 533" stroke="#e8e8e8" stroke-width="1"/><path d="M531.5 538 L534 530 L536.5 538" stroke="#e8e8e8" fill="none"/><circle cx="536.5" cy="564" r="2.6" fill="#ff1a1a"/><path d="M1061.3 761.4 L1132 718.5 L1187.5 694 L1457.9 601.2 L1457.9 580 L1443 578 Q1400 574 1363.4 580 Q1320 588 1275.5 609.4 Q1230 630 1187.5 651.7 Q1160 666 1132.2 682.6 L1061.3 733.9Z" fill="#7f7e8a"/><path d="M967.4 676.9 L1061.3 733.9 L1061.3 761.4 L967.4 704.4Z" fill="#7c7b87"/><path d="M967.4 676.9 L1045 621 Q1070 602 1090 577 L1130.5 528.6 C1150 504 1180 468 1231.5 458.9 L1321.7 506.8 L1321.7 525.3 L1303.2 537 L1314 533.9 C1330 529 1345 528 1363.4 529.6 L1457.9 580 Q1400 572 1363.4 580 Q1320 588 1275.5 609.4 Q1230 630 1187.5 651.7 Q1160 666 1132.2 682.6 L1061.3 733.9Z" fill="url(#top)"/><path d="M1303.2 537 L1314 533.9 C1330 529 1345 528 1363.4 529.6 L1457.9 580 Q1400 572 1363.4 580 Q1320 588 1275.5 609.4 L1260 595Z" fill="#a3a2ae" opacity="0.5"/><path d="M1260.8 515.6 Q1290 507 1321.7 506.8 L1321.7 525.3 L1303.2 537Z" fill="#878693"/><path d="M967.4 676.9 L1061.3 733.9 L1061.3 761.4 L967.4 704.4Z" stroke="#16eef6" stroke-width="2" fill="none" stroke-linejoin="round"/><path d="M967.4 676.9 L1045 621 Q1070 602 1090 577 L1130.5 528.6 C1150 504 1180 468 1231.5 458.9 L1321.7 506.8 L1321.7 525.3 L1303.2 537 L1260.8 515.6 Q1290 507 1321.7 506.8" stroke="#16eef6" stroke-width="2" fill="none" stroke-linejoin="round"/><path d="M1303.2 537 L1314 533.9 C1330 529 1345 528 1363.4 529.6 L1457.9 580 L1457.9 601.2 L1187.5 694 Q1160 705 1132.2 718.5 L1061.3 761.4" stroke="#16eef6" stroke-width="2" fill="none" stroke-linejoin="round"/><path d="M1457.9 580 Q1400 572 1363.4 580 Q1320 588 1275.5 609.4 Q1230 630 1187.5 651.7 Q1160 666 1132.2 682.6 L1061.3 733.9" stroke="#16eef6" stroke-width="2" fill="none" stroke-linejoin="round"/><path d="M1130.5 528.6 L1275.5 610" stroke="#16eef6" stroke-width="2" fill="none" stroke-linejoin="round"/><path d="M1132.2 682.6 V718.5 M1187.5 651.7 V694" stroke="#16eef6" stroke-width="2" fill="none" stroke-linejoin="round"/><path d="M1234.7 480.7 L1311.3 520.8 L1251 557.2 L1301.5 586.6 L1363.4 550.7 L1443.2 593.1 M1234.7 480.7 L1134.8 578.4 L1267.3 655" stroke="#1a6ff0" stroke-width="1" fill="none"/><path d="M1267.3 655 L1443.2 593.1" stroke="#1a6ff0" stroke-width="2.4" fill="none"/><path d="M1311.3 520.8 L1296 530" stroke="#1a6ff0" stroke-width="2.4" fill="none"/><path d="M997 722 L1013.5 733 M1014 719 V733" stroke="#1a8a8a" stroke-width="2"/><circle cx="1013.5" cy="733" r="3.6" fill="#103838"/><circle cx="1013.5" cy="733" r="2.6" fill="#2a9a9a"/><path d="M377 947 V938" stroke="#6070e0" stroke-width="2"/><path d="M374 941 L377 933 L380 941Z" fill="#3040c0"/><path d="M378 947 L386 943" stroke="#ff8080" stroke-width="2.2"/><path d="M383 941 L391 941 L386 946Z" fill="#8a0000"/><path d="M376 947 L368 943" stroke="#60ff60" stroke-width="2.2"/><path d="M361 941 L370 941 L366 946Z" fill="#008a00"/><circle cx="377" cy="948" r="2" fill="#fff"/><text x="375.5" y="927.5" font-size="8" font-weight="bold" fill="#1010ff" font-family="Liberation Sans">Z</text><text x="394" y="939.5" font-size="8" fill="#ff1010" font-family="Liberation Sans">X</text><text x="355" y="939.5" font-size="8" fill="#10e010" font-family="Liberation Sans">Y</text></svg>
<div class="a" style="left:1399px;top:26px;width:489px;height:333px;box-shadow:0 1px 3px rgba(0,0,0,0.45)"></div>
<div class="a" style="left:1399px;top:26px;width:489px;height:333px;background:#f0f0f0;border:1px solid #f8f8f8"></div>
<div class="a" style="left:1400px;top:27px;width:487px;height:29px;background:#fff"></div>
<div class="t" style="left:1407px;top:35px;font-size:11.8px;color:#8c8c8c;letter-spacing:-0.1px">Create an extrude</div>
<svg style="left:1865px;top:34px" width="14" height="13" viewBox="0 0 14 13"><path d="M0.5 0.5 L13.5 12.5 M13.5 0.5 L0.5 12.5" stroke="#777" stroke-width="1"/></svg>
<div class="a" style="left:1405px;top:83px;width:474px;height:246px;background:#fff;border:1px solid #d9d9d9"></div>
<div class="a" style="left:1406px;top:84px;width:472px;height:244px;background:#fff"></div>
<div class="a" style="left:1456px;top:65px;width:83px;height:19px;background:#f0f0f0;border:1px solid #d9d9d9;border-bottom:none"></div>
<div class="dlg" style="left:1461px;top:69px;letter-spacing:-0.2px">Profile Behavior</div>
<div class="a" style="left:1405px;top:63px;width:52px;height:22px;background:#fff;border:1px solid #d9d9d9;border-bottom:none"></div>
<div class="dlg" style="left:1412px;top:67px;letter-spacing:-0.2px">Extrude</div>
<div class="a" style="left:1414px;top:103px;width:168px;height:210px;border:1px solid #dcdcdc;"></div>
<div class="dlg" style="left:1421px;top:97px;background:#fff;padding:0 2px;letter-spacing:-0.2px">Creation</div>
<div class="a" style="left:1423px;top:116px;width:149px;height:58px;border:1px solid #dcdcdc;"></div>
<div class="dlg" style="left:1430px;top:110px;background:#fff;padding:0 2px;letter-spacing:-0.2px">Type</div>
<div class="a" style="left:1423px;top:266px;width:149px;height:41px;border:1px solid #dcdcdc;"></div>
<div class="dlg" style="left:1430px;top:260px;background:#fff;padding:0 2px;letter-spacing:-0.2px">Affected Part</div>
<div class="a" style="left:1590px;top:103px;width:284px;height:210px;border:1px solid #dcdcdc;"></div>
<div class="dlg" style="left:1596px;top:97px;background:#fff;padding:0 2px;letter-spacing:-0.2px">Direction</div>
<div class="a" style="left:1595px;top:163px;width:137px;height:145px;border:1px solid #dcdcdc;"></div>
<div class="dlg" style="left:1602px;top:157px;background:#fff;padding:0 2px;letter-spacing:-0.2px">Forward Direction</div>
<div class="a" style="left:1734px;top:163px;width:137px;height:145px;border:1px solid #dcdcdc;"></div>
<div class="dlg" style="left:1740px;top:157px;background:#fff;padding:0 2px;letter-spacing:-0.2px">Backward Direction</div>
<div class="a" style="left:1432px;top:124px;width:24px;height:19px;border-left:1px solid #7a7a7a;border-top:1px solid #9a9a9a"></div>
<svg style="left:1434px;top:125px" width="20" height="17" viewBox="0 0 20 17"><path d="M1 9 Q4 3 8 5 Q11 1 15 4 Q18 6 19 10 L19 14 L1 14Z" fill="#888" stroke="#333" stroke-width="0.8"/><path d="M1 9 Q4 6 8 8 Q11 5 15 7 L19 10" fill="none" stroke="#ddd"/></svg>
<div class="rad on" style="left:1462.5px;top:128.5px"></div>
<div class="dlg" style="left:1479px;top:129px;">Solid</div>
<div class="a" style="left:1432px;top:148px;width:24px;height:19px;border-left:1px solid #7a7a7a;border-top:1px solid #9a9a9a"></div>
<svg style="left:1434px;top:149px" width="20" height="17" viewBox="0 0 20 17"><path d="M1 14 Q3 6 7 7 Q10 2 14 5 Q17 7 19 14 Q15 11 10 12 Q5 11 1 14Z" fill="#888" stroke="#333" stroke-width="0.8"/></svg>
<div class="rad" style="left:1462.5px;top:151.5px"></div>
<div class="dlg" style="left:1479px;top:152px;">Surface</div>
<div class="a" style="left:1432px;top:183px;width:24px;height:19px;border-left:1px solid #7a7a7a;border-top:1px solid #9a9a9a"></div>
<svg style="left:1434px;top:184px" width="20" height="17" viewBox="0 0 20 17"><path d="M5 4 L10 1 L15 4 V11 L10 14 L5 11Z" fill="#aaa" stroke="#555" stroke-width="0.6"/><path d="M5 4 L10 7 L15 4 M10 7 V14" stroke="#555" stroke-width="0.6" fill="none"/></svg>
<div class="rad" style="left:1462.5px;top:187.5px"></div>
<div class="dlg" style="left:1479px;top:188px;letter-spacing:-0.15px">Stand alone</div>
<div class="a" style="left:1432px;top:207px;width:24px;height:19px;border-left:1px solid #7a7a7a;border-top:1px solid #9a9a9a"></div>
<svg style="left:1434px;top:208px" width="20" height="17" viewBox="0 0 20 17"><path d="M1 10 L10 5 L19 10 V16 L10 18 L1 14Z" fill="#ccc" stroke="#333" stroke-width="0.7"/><path d="M10 12 L19 10 V16 L10 18Z" fill="#333"/><path d="M6 5 L10 2 L14 4 V9 L10 11 L6 9Z" fill="#888" stroke="#222" stroke-width="0.7"/></svg>
<div class="rad" style="left:1462.5px;top:211.5px"></div>
<div class="dlg" style="left:1479px;top:212px;letter-spacing:-0.2px">Add Material</div>
<div class="a" style="left:1432px;top:231px;width:24px;height:19px;border-left:1px solid #7a7a7a;border-top:1px solid #9a9a9a"></div>
<svg style="left:1434px;top:232px" width="20" height="17" viewBox="0 0 20 17"><path d="M1 10 L10 5 L19 10 V16 L10 18 L1 14Z" fill="#ddd" stroke="#333" stroke-width="0.7"/><path d="M10 12 L19 10 V16 L10 18Z" fill="#333"/><ellipse cx="10" cy="9" rx="4" ry="2.5" fill="#222"/><path d="M7 6 L10 3 L13 6" fill="#fff" stroke="#222" stroke-width="0.6"/></svg>
<div class="rad on" style="left:1462.5px;top:236.5px"></div>
<div class="dlg" style="left:1479px;top:237px;letter-spacing:-0.3px">Remove Material</div>
<div class="a" style="left:1432px;top:275px;width:135px;height:23px;background:#fff;border:1px solid #7a7a7a"></div>
<div class="dlg" style="left:1435px;top:281px;letter-spacing:-0.2px">Part3</div>
<div class="chk" style="left:1598px;top:114px"></div>
<div class="dlg" style="left:1614px;top:115px;letter-spacing:-0.35px">Reverse Extrude Direction</div>
<div class="chk" style="left:1598px;top:136px"></div>
<div class="dlg" style="left:1614px;top:137px;letter-spacing:-0.3px">Extrude From Midplane</div>
<div class="rad on" style="left:1597.5px;top:177.5px"></div>
<div class="dlg" style="left:1614px;top:178px;letter-spacing:-0.2px">Distance</div>
<div class="a" style="left:1618px;top:200px;width:90px;height:23px;background:#fff;border:1px solid #7a7a7a"></div>
<div class="dlg" style="left:1621px;top:205px;">20</div>
<div class="rad" style="left:1597.5px;top:232.5px"></div>
<div class="dlg" style="left:1614px;top:233px;letter-spacing:-0.3px">To face(s) on part</div>
<div class="rad" style="left:1597.5px;top:257.5px"></div>
<div class="dlg" style="left:1614px;top:258px;letter-spacing:-0.3px">To Surface on part</div>
<div class="rad" style="left:1597.5px;top:281.5px"></div>
<div class="dlg" style="left:1614px;top:282px;letter-spacing:-0.3px">Through part</div>
<div class="rad on dis" style="left:1737.5px;top:179.5px"></div>
<div class="dlg" style="left:1754px;top:180px;color:#a0a0a0;letter-spacing:-0.25px">Distance</div>
<div class="a" style="left:1756px;top:200px;width:90px;height:23px;background:#fbfbfb;border:1px solid #d4d4d4"></div>
<div class="dlg" style="left:1759px;top:205px;color:#888">50</div>
<div class="rad dis" style="left:1737.5px;top:232.5px"></div>
<div class="dlg" style="left:1754px;top:233px;color:#a0a0a0;letter-spacing:-0.25px">To face(s) on part</div>
<div class="rad dis" style="left:1737.5px;top:258.5px"></div>
<div class="dlg" style="left:1754px;top:259px;color:#a0a0a0;letter-spacing:-0.25px">To Surface on part</div>
<div class="rad dis" style="left:1737.5px;top:282.5px"></div>
<div class="dlg" style="left:1754px;top:284px;color:#a0a0a0;letter-spacing:-0.25px">Through part</div>
<div class="a" style="left:1564px;top:337px;width:73px;height:21px;background:#e1e1e1;border:2px solid #0078d7"></div>
<div class="dlg" style="left:1590px;top:342px;">OK</div>
<div class="a" style="left:1645px;top:337px;width:73px;height:21px;background:#e1e1e1;border:1px solid #adadad"></div>
<div class="dlg" style="left:1663px;top:342px;letter-spacing:-0.2px">Cancel</div>
<div class="a" style="left:1726px;top:337px;width:73px;height:21px;background:#cccccc;border:1px solid #bfbfbf"></div>
<div class="dlg" style="left:1748px;top:342px;color:#9a9a9a;letter-spacing:-0.2px">Apply</div>
<div class="a" style="left:1807px;top:337px;width:73px;height:21px;background:#e1e1e1;border:1px solid #adadad"></div>
<div class="dlg" style="left:1831px;top:342px;letter-spacing:-0.2px">Help</div>
<div class="t" style="left:3.5px;top:1022px;font-size:12px;color:#0563c1;text-decoration:underline;letter-spacing:0.35px">http://www.ironcad.com</div>
<div class="t" style="left:1155px;top:1022px;font-size:11.6px;color:#333;letter-spacing:-0.2px;white-space:pre">View size: 1582 x  780</div>
<div class="t" style="left:1293px;top:1022px;font-size:11.6px;color:#333;letter-spacing:-0.1px">Units: mm, deg</div>
<svg style="left:1386px;top:1021px" width="16" height="16" viewBox="0 0 16 16"><rect x="1.5" y="1.5" width="7" height="8" fill="#fff" stroke="#333"/><circle cx="6.5" cy="6.5" r="5" fill="none" stroke="#222" stroke-width="1.5"/><path d="M10 10 L15 15" stroke="#222" stroke-width="2.2"/></svg>
<svg style="left:1409px;top:1021px" width="16" height="16" viewBox="0 0 16 16"><circle cx="6.5" cy="6.5" r="5" fill="#fff" stroke="#222" stroke-width="1.5"/><rect x="4" y="4" width="5" height="5" fill="none" stroke="#555"/><path d="M10 10 L15 15" stroke="#222" stroke-width="2.2"/></svg>
<div class="dd" style="left:1432px;top:1028px;border-top-color:#666"></div>
<svg style="left:1444px;top:1022px" width="17" height="15" viewBox="0 0 17 15"><path d="M0.5 4.5 H10.5 V14.5 H0.5Z" fill="#f5e040" stroke="#333"/><path d="M0.5 4.5 L4.5 0.5 H14.5 L10.5 4.5Z" fill="#f8f0a0" stroke="#333"/><path d="M10.5 4.5 L14.5 0.5 V10.5 L10.5 14.5Z" fill="#d8c020" stroke="#333"/><path d="M13 5 H17 M15 3 V7" stroke="#e02020" stroke-width="1.3"/></svg>
<div class="dd" style="left:1467px;top:1028px;border-top-color:#666"></div>
<svg style="left:1479px;top:1021px" width="17" height="17" viewBox="0 0 17 17"><path d="M0.5 4.5 H12.5 V16.5 H0.5Z" fill="#3a6fb8" stroke="#1a3a70"/><path d="M0.5 4.5 L4.5 0.5 H16.5 L12.5 4.5Z" fill="#8cb4e8" stroke="#1a3a70"/><path d="M12.5 4.5 L16.5 0.5 V12.5 L12.5 16.5Z" fill="#5a8cd0" stroke="#1a3a70"/></svg>
<div class="dd" style="left:1502px;top:1028px;border-top-color:#666"></div>
<svg style="left:1514px;top:1021px" width="18" height="17" viewBox="0 0 18 17"><path d="M4 1 V6 M1 3 H7 M2 1 L4 0 L6 1" stroke="#2050a0" fill="none"/><rect x="6" y="6" width="8" height="7" fill="#fff" stroke="#333"/><rect x="8" y="9" width="8" height="7" fill="#ddd" stroke="#333"/><path d="M0 8 L3 6 V10Z" fill="#2050a0"/></svg>
<div class="dd" style="left:1537px;top:1028px;border-top-color:#666"></div>
<div class="a" style="left:1546px;top:1018px;width:23px;height:20px;background:#cfcfcf"></div>
<svg style="left:1549px;top:1021px" width="17" height="15" viewBox="0 0 17 15"><path d="M0.5 10 L12 1 H16.5 L6 14 H0.5Z" fill="#3a78c8" stroke="#1a3a70"/><path d="M12 1 L16.5 1 L6 14" fill="#9cc4f0"/></svg>
<svg style="left:1573px;top:1023px" width="17" height="13" viewBox="0 0 17 13"><circle cx="4" cy="8" r="3.5" fill="none" stroke="#1a3a70" stroke-width="1.6"/><circle cx="12" cy="8" r="3.5" fill="none" stroke="#1a3a70" stroke-width="1.6"/><path d="M1 1 Q0 5 1 7 M9 1 Q8 5 9 7" stroke="#1a3a70" stroke-width="1.3" fill="none"/></svg>
<div class="dd" style="left:1592px;top:1028px;border-top-color:#666"></div>
<svg style="left:1604px;top:1021px" width="17" height="17" viewBox="0 0 17 17"><path d="M0.5 4.5 H12.5 V16.5 H0.5Z" fill="#a8c8f0" stroke="#222" stroke-width="1.4"/><path d="M0.5 4.5 L4.5 0.5 H16.5 L12.5 4.5Z" fill="#d8e8f8" stroke="#222" stroke-width="1.4"/><path d="M12.5 4.5 L16.5 0.5 V12.5 L12.5 16.5Z" fill="#7aa0d0" stroke="#222" stroke-width="1.4"/></svg>
<div class="dd" style="left:1625px;top:1028px;border-top-color:#666"></div>
<svg style="left:1638px;top:1022px" width="16" height="15" viewBox="0 0 16 15"><path d="M0.5 6 L4 3 H11 V12 L7 14.5 H0.5Z" fill="#c8c8c8" stroke="#999"/><path d="M4 3 L7 0.5 H15 V9 L11 12" fill="#ddd" stroke="#999"/></svg>
<div class="dd" style="left:1658px;top:1028px;border-top-color:#bbb"></div>
<svg style="left:1670px;top:1021px" width="18" height="17" viewBox="0 0 18 17"><path d="M1 9 Q1 4 6 4 H9 V1 L14 5 L9 9 V7 H6 Q4 7 4 10 V13 H1Z" fill="#aaa"/><path d="M9 8 L9 17 L11 14 L13 17 L14 16 L12 13 L16 13Z" fill="#fff" stroke="#aaa" stroke-width="0.8"/></svg>
<div class="a" style="left:1691px;top:1018px;width:23px;height:20px;background:#cfcfcf"></div>
<svg style="left:1697px;top:1022px" width="11" height="15" viewBox="0 0 11 15"><path d="M0.5 0.5 V12 L3 9.5 L5.5 14.5 L7.5 13.5 L5.2 8.7 L9 8.7Z" fill="#fff" stroke="#000" stroke-width="1"/></svg>
<svg style="left:1719px;top:1022px" width="15" height="15" viewBox="0 0 15 15"><rect x="0.5" y="0.5" width="12" height="7" fill="none" stroke="#999"/><path d="M6.5 4.5 V14 L8.5 12 L10.5 15 L11.5 14.5 L10 11.5 L13 11.5Z" fill="#fff" stroke="#000" stroke-width="1"/></svg>
<div class="a" style="left:1740px;top:1019px;width:88px;height:20px;background:#fff;border:1px solid #c8c8c8"></div>
<div class="t" style="left:1743px;top:1023px;font-size:12px;color:#000">Part</div>
<div class="dd" style="left:1817px;top:1028px;border-top-color:#555"></div>
<div class="a" style="left:1830px;top:1019px;width:64px;height:20px;background:#fff;border:1px solid #c8c8c8"></div>
<div class="t" style="left:1833px;top:1023px;font-size:12px;color:#000">Default</div>
<div class="dd" style="left:1883px;top:1028px;border-top-color:#555"></div>
<svg style="left:1897px;top:1022px" width="16" height="14" viewBox="0 0 16 14"><rect x="5" y="0" width="6" height="4" fill="#bbb"/><path d="M8 4 V6 M2.5 6 H13.5 M2.5 6 V8 M13.5 6 V8" stroke="#bbb"/><rect x="0" y="8" width="6" height="5" fill="#bbb"/><rect x="10" y="8" width="6" height="5" fill="#bbb"/></svg>
</body></html>
